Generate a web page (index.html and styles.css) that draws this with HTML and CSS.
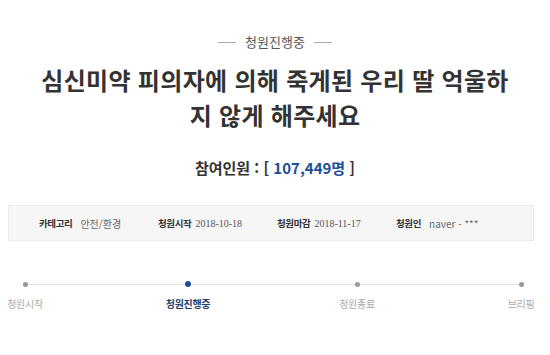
FILE: index.html
```html
<!DOCTYPE html>
<html lang="ko">
  <head>
    <meta charset="UTF-8" />
    <meta name="viewport" content="width=device-width, initial-scale=1.0" />
    <title>청원진행중</title>
    <link rel="stylesheet" href="styles.css">
  </head>
  <body>
    <div class="petition">
      <div class="status-tag">
        <span class="dash"></span>
        <span>청원진행중</span>
        <span class="dash"></span>
      </div>

      <h1 class="title">심신미약 피의자에 의해 죽게된 우리 딸 억울하<br />지 않게 해주세요</h1>

      <div class="count">참여인원 : [ <span class="count-num">107,449명</span> ]</div>

      <div class="info-box">
        <div class="info-item">
          <span class="info-label">카테고리</span>
          <span class="info-value">안전/환경</span>
        </div>
        <div class="info-item">
          <span class="info-label">청원시작</span>
          <span class="info-value date">2018-10-18</span>
        </div>
        <div class="info-item">
          <span class="info-label">청원마감</span>
          <span class="info-value date">2018-11-17</span>
        </div>
        <div class="info-item">
          <span class="info-label">청원인</span>
          <span class="info-value">naver - ***</span>
        </div>
      </div>

      <div class="timeline">
        <div class="step">
          <span class="dot"></span>
          <span class="step-label">청원시작</span>
        </div>
        <div class="step active">
          <span class="dot"></span>
          <span class="step-label">청원진행중</span>
        </div>
        <div class="step">
          <span class="dot"></span>
          <span class="step-label">청원종료</span>
        </div>
        <div class="step">
          <span class="dot"></span>
          <span class="step-label">브리핑</span>
        </div>
      </div>
    </div>
  </body>
</html>
```

FILE: styles.css
```css
:root {
  --text-dark: #333333;
  --text-gray: #666666;
  --blue: #1d4f9a;
  --line: #e2e2e2;
  --box-bg: #f6f6f6;
}

* {
  box-sizing: border-box;
  margin: 0;
  padding: 0;
}

body {
  font-family: "Noto Sans CJK KR", "Noto Sans", sans-serif;
  background: #ffffff;
  color: var(--text-dark);
}

.petition {
  width: 550px;
  padding-top: 33px;
}

.status-tag {
  display: flex;
  justify-content: center;
  align-items: center;
  gap: 9px;
  font-size: 13px;
  line-height: 18px;
  color: #555555;
}

.dash {
  width: 18px;
  height: 1px;
  background: #aaaaaa;
}

.title {
  margin-top: 11px;
  text-align: center;
  font-size: 24px;
  line-height: 35px;
  font-weight: 700;
  letter-spacing: 0.3px;
  color: var(--text-dark);
}

.count {
  margin-top: 26px;
  text-align: center;
  font-size: 15px;
  line-height: 20px;
  font-weight: 700;
  color: var(--text-dark);
}

.count-num {
  color: var(--blue);
}

.info-box {
  margin: 27px 16px 0 8px;
  height: 36px;
  padding-left: 30px;
  display: grid;
  grid-template-columns: repeat(4, 119px);
  align-items: center;
  background: var(--box-bg);
  border: 1px solid #ebebeb;
  font-size: 9.5px;
}

.info-item {
  display: flex;
  align-items: center;
  gap: 8px;
  white-space: nowrap;
}

.info-label {
  font-weight: 700;
  color: #333333;
  letter-spacing: -0.4px;
}

.info-value {
  color: var(--text-gray);
  font-size: 10px;
}

.info-value.date {
  margin-left: -4px;
  font-family: "Liberation Serif", serif;
  color: #555555;
}

.timeline {
  position: relative;
  margin: 40px 0 0 25px;
  display: grid;
  grid-template-columns: 163px 169px 164px 0;
}

.timeline::before {
  content: "";
  position: absolute;
  left: 0;
  width: 496px;
  top: 3px;
  height: 1px;
  background: var(--line);
}

.step {
  width: 0;
  display: flex;
  flex-direction: column;
  align-items: center;
  white-space: nowrap;
}

.dot {
  position: relative;
  width: 5px;
  height: 5px;
  margin-top: 1px;
  border-radius: 50%;
  background: #999999;
}

.step-label {
  margin-top: 10px;
  font-size: 10px;
  line-height: 14px;
  color: #aaaaaa;
  letter-spacing: -0.3px;
}

.step.active .dot {
  width: 6px;
  height: 6px;
  margin-top: 0;
  background: var(--blue);
}

.step.active .step-label {
  color: #283f6b;
  font-weight: 700;
}
```
